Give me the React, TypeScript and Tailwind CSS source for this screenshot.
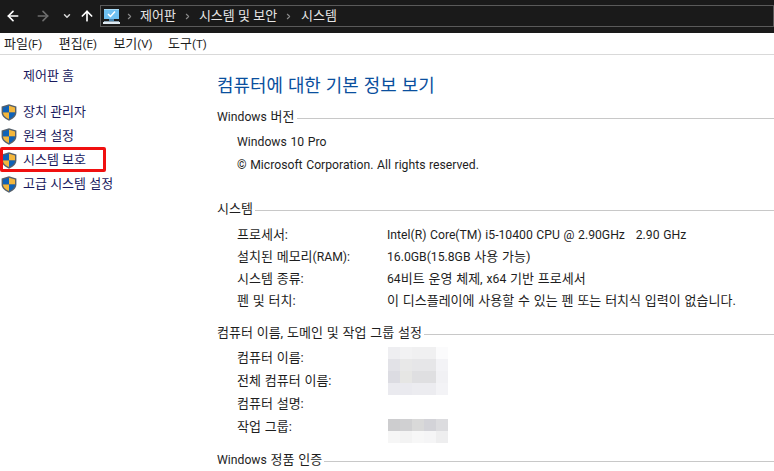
import { ArrowLeft, ArrowRight, ArrowUp, ChevronDown, ChevronRight } from 'lucide-react';

const FONT = "font-['Roboto','Noto_Sans_CJK_KR',sans-serif]";

// 라틴 문자는 한글보다 조금 작게
function L({ children }: { children: React.ReactNode }) {
  return <span className="text-[12.2px]">{children}</span>;
}

function Shield() {
  return (
    <svg width="16" height="17" viewBox="0 0 16 17" className="shrink-0">
      <path d="M8 0.3 L15.4 2.4 V8.5 C15.4 12.5 11.5 15.2 8 16.7 C4.5 15.2 0.6 12.5 0.6 8.5 V2.4 Z" fill="#56616c" />
      <path d="M8 1.8 L2 3.5 V8.5 H8 Z" fill="#0f62b8" />
      <path d="M8 1.8 L14 3.5 V8.5 H8 Z" fill="#f4b73c" />
      <path d="M2 8.5 H8 V15 C5 13.8 2.2 11.8 2 8.5 Z" fill="#f4b73c" />
      <path d="M14 8.5 H8 V15 C11 13.8 13.8 11.8 14 8.5 Z" fill="#0f62b8" />
    </svg>
  );
}

function Monitor() {
  return (
    <svg width="17" height="15" viewBox="0 0 17 15" className="shrink-0">
      <rect x="1" y="0" width="15" height="10" fill="#6fc0f0" />
      <rect x="1" y="0" width="15" height="1" fill="#a8dcf8" />
      <path d="M5 5 L7.5 7.5 L12 2.5" stroke="#fff" strokeWidth="1.5" fill="none" />
      <rect x="6" y="10" width="5" height="2" fill="#4a86b0" />
      <rect x="1" y="12" width="15" height="1" fill="#8fa6b6" />
      <rect x="0" y="13" width="17" height="2" fill="#dfe9f0" />
    </svg>
  );
}

function Section({ title, children }: { title: React.ReactNode; children?: React.ReactNode }) {
  return (
    <div>
      <div className="flex h-[18px] items-center">
        <span className="mr-[2px] text-[#1e1e1e]">{title}</span>
        <div className="h-px flex-1 translate-y-[1px] bg-[#c8c8c8]" />
      </div>
      {children}
    </div>
  );
}

function Row({ label, compact, children }: { label: React.ReactNode; compact?: boolean; children?: React.ReactNode }) {
  return (
    <div className={`flex items-center pl-[20px] text-[#1e1e1e] ${compact ? 'h-[22px]' : 'h-[23px]'}`}>
      <div className="w-[150px] shrink-0">{label}</div>
      <div className="relative whitespace-nowrap">{children}</div>
    </div>
  );
}

function Blur({ rows, offset }: { rows: string[][]; offset: string }) {
  return (
    <div className={`absolute left-px flex flex-col ${offset}`}>
      {rows.map((r, i) => (
        <div key={i} className="flex">
          {r.map((c, j) => (
            <div key={j} className="h-[12px] w-[12px]" style={{ backgroundColor: c }} />
          ))}
        </div>
      ))}
    </div>
  );
}

const nameBlur = [
  ['#eeeef1', '#f2f2f3', '#f0f0f1', '#f0f0f1', '#fbfbfc'],
  ['#e2e2e7', '#e8e8e8', '#e6e6e8', '#e6e6e8', '#f3f3f6'],
  ['#dcdce2', '#e6e6e4', '#dfdfe1', '#dfdfe1', '#f1f1f4'],
  ['#eaeaef', '#eaeaef', '#ececf0', '#ececf0', '#f3f3f6'],
];
const groupBlur = [
  ['#cdcdcf', '#d0d0d2', '#d9d9d9', '#d3d3d8', '#dcdcdf'],
  ['#f6f6f6', '#f3f3f3', '#f7f7f7', '#f5f5f6', '#eeeeef'],
];

export default function App() {
  return (
    <div className={`${FONT} flex h-[471px] w-[774px] flex-col overflow-hidden bg-white text-[13px]`}>
      {/* 주소 표시줄 */}
      <div className="flex h-[33px] items-start bg-[#1a1a1a] pt-[5px] text-[#e6e6e6]">
        <div className="flex h-[22px] items-center">
          <ArrowLeft size={16} strokeWidth={2.5} className="ml-[5px] text-white" />
          <ArrowRight size={16} strokeWidth={2.5} className="ml-[14px] text-[#6e6e6e]" />
          <ChevronDown size={10} strokeWidth={3.5} className="ml-[11px] text-[#d8d8d8]" />
          <ArrowUp size={16} strokeWidth={2.5} className="ml-[7px] text-white" />
        </div>
        <div className="ml-[5px] flex h-[22px] flex-1 items-center border border-[#5a5a5a] pl-[2px]">
          <Monitor />
          <ChevronRight size={9} strokeWidth={3} className="ml-[5px] text-[#8a8a8a]" />
          <span className="ml-[6px]">제어판</span>
          <ChevronRight size={9} strokeWidth={3} className="ml-[7px] text-[#8a8a8a]" />
          <span className="ml-[7px]">시스템 및 보안</span>
          <ChevronRight size={9} strokeWidth={3} className="ml-[7px] text-[#8a8a8a]" />
          <span className="ml-[8px]">시스템</span>
        </div>
      </div>

      {/* 메뉴 */}
      <div className="flex h-[22px] items-center gap-[17.7px] border-b border-[#d9d9d9] pl-[4px] text-[#1e1e1e]">
        {['파일(F)', '편집(E)', '보기(V)', '도구(T)'].map((m) => (
          <span key={m} className="w-[37px] whitespace-nowrap">
            {m.slice(0, 2)}
            <span className="text-[11.5px]">{m.slice(2)}</span>
          </span>
        ))}
      </div>

      <div className="flex flex-1">
        {/* 왼쪽 메뉴 */}
        <aside className="w-[217px] shrink-0 pt-[13px] text-[#1a1a5e]">
          <div className="h-[16px] pl-[23px] leading-[16px]">제어판 홈</div>
          <div className="mt-[16px] flex flex-col">
            {['장치 관리자', '원격 설정', '시스템 보호', '고급 시스템 설정'].map((item) => (
              <div key={item} className="flex h-[24px] items-center gap-[6px] pl-px">
                <Shield />
                <span>{item}</span>
              </div>
            ))}
          </div>
        </aside>

        {/* 본문 */}
        <main className="min-w-0 flex-1 pt-[20px] [word-spacing:0.6px]">
          <h1 className="h-[22px] text-[17.9px] leading-[22px] font-normal text-[#0a4f9e]">컴퓨터에 대한 기본 정보 보기</h1>
          <div className="mt-[11px]">
            <Section title={<><L>Windows</L> 버전</>}>
              <div className="mt-[5px] pl-[20px] text-[#1e1e1e]">
                <div className="flex h-[23px] items-center"><L>Windows 10 Pro</L></div>
                <div className="flex h-[23px] items-center"><L>© Microsoft Corporation. All rights reserved.</L></div>
              </div>
            </Section>
          </div>
          <div className="mt-[23px]">
            <Section title="시스템">
              <div className="mt-[6px]">
                <Row compact label="프로세서:"><L>Intel(R) Core(TM) i5-10400 CPU @ 2.90GHz&nbsp;&nbsp; 2.90 GHz</L></Row>
                <Row compact label={<>설치된 메모리<L>(RAM):</L></>}><L>16.0GB(15.8GB</L> 사용 가능)</Row>
                <Row compact label="시스템 종류:"><L>64</L>비트 운영 체제, <L>x64</L> 기반 프로세서</Row>
                <Row compact label="펜 및 터치:">이 디스플레이에 사용할 수 있는 펜 또는 터치식 입력이 없습니다.</Row>
              </div>
            </Section>
          </div>
          <div className="mt-[12px]">
            <Section title="컴퓨터 이름, 도메인 및 작업 그룹 설정">
              <div className="mt-[4px]">
                <Row label="컴퓨터 이름:">
                  <Blur rows={nameBlur} offset="top-[-11px]" />
                </Row>
                <Row label="전체 컴퓨터 이름:" />
                <Row label="컴퓨터 설명:" />
                <Row label="작업 그룹:">
                  <Blur rows={groupBlur} offset="top-[-8px]" />
                </Row>
              </div>
            </Section>
          </div>
          <div className="mt-[13px]">
            <Section title={<><L>Windows</L> 정품 인증</>} />
          </div>
        </main>
      </div>

      {/* 빨간 강조 상자 */}
      <div className="absolute left-0 top-[147px] h-[25px] w-[106px] rounded-[2px] border-[3px] border-[#f01010]" />
    </div>
  );
}
